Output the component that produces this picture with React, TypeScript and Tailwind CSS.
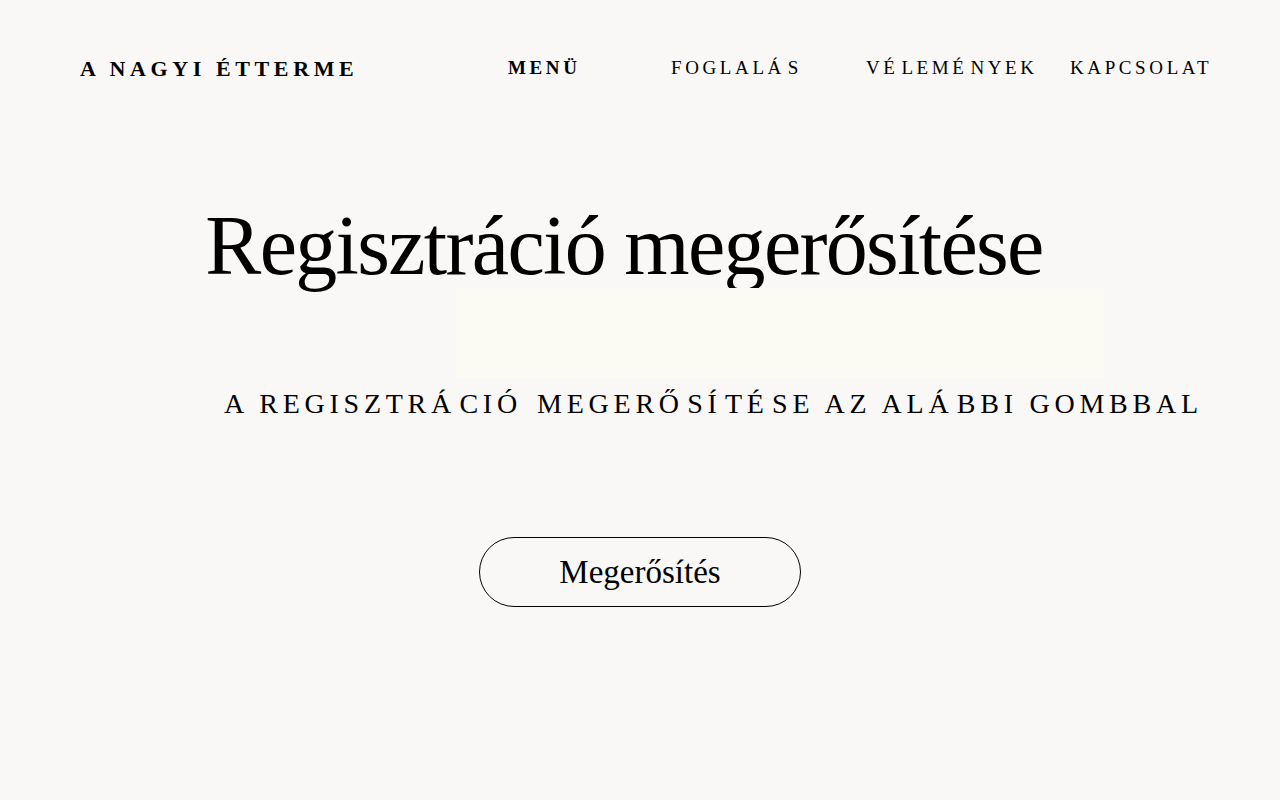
import React from 'react';

const serif = { fontFamily: '"Liberation Serif", "DejaVu Serif", serif' };

// the original shows an extra gap after accented capitals (spaced combining marks)
const Spaced: React.FC<{ text: string; gap?: string }> = ({ text, gap = 'w-[0.2em]' }) => (
  <>
    {text.split(/([ÁÉÍÓŐÚŰ])/).map((part, i) =>
      /^[ÁÉÍÓŐÚŰ]$/.test(part) ? (
        <React.Fragment key={i}>
          {part}
          <span className={`inline-block ${gap}`} />
        </React.Fragment>
      ) : (
        <React.Fragment key={i}>{part}</React.Fragment>
      )
    )}
  </>
);

const navItems = [
  { label: 'MENÜ', bold: true, width: 'w-[163px]' },
  { label: 'FOGLALÁS', bold: false, width: 'w-[195px]' },
  { label: 'VÉLEMÉNYEK', bold: false, width: 'w-[204px]' },
  { label: 'KAPCSOLAT', bold: false, width: 'w-[150px]' },
];

export default function App() {
  return (
    <div className="min-h-[800px] w-full bg-[#f9f8f6] text-black" style={serif}>
      {/* Header */}
      <header className="flex items-center pt-[54px] pl-[80px]">
        <div className="w-[428px] whitespace-nowrap text-[22px] font-bold tracking-[0.21em] leading-none pt-[4px]">
          A NAGYI ÉTTERME
        </div>
        <nav className="flex items-center">
          {navItems.map((item) => (
            <a
              key={item.label}
              className={`${item.width} whitespace-nowrap text-[19px] tracking-[0.19em] leading-none ${item.bold ? 'font-bold' : 'font-normal'}`}
            >
              {item.bold ? item.label : <Spaced text={item.label} gap="w-[0.15em]" />}
            </a>
          ))}
        </nav>
      </header>

      {/* Title */}
      <main className="flex flex-col">
        <h1 className="mt-[124px] pr-[32px] text-center text-[84px] leading-none tracking-[-0.02em]">
          Regisztráció megerősítése
        </h1>

        <div className="ml-[456px] h-[90px] w-[648px] bg-[#fbfbf3]" />

        <p className="ml-[224px] mt-[12px] whitespace-nowrap text-[28px] tracking-[0.17em] leading-none">
          <Spaced text="A REGISZTRÁCIÓ MEGERŐSÍTÉSE AZ ALÁBBI GOMBBAL" gap="w-[0.12em]" />
        </p>

        <div className="mt-[119px] flex justify-center">
          <button className="h-[70px] w-[322px] rounded-full border border-black text-[33px] leading-none">
            Megerősítés
          </button>
        </div>
      </main>
    </div>
  );
}
